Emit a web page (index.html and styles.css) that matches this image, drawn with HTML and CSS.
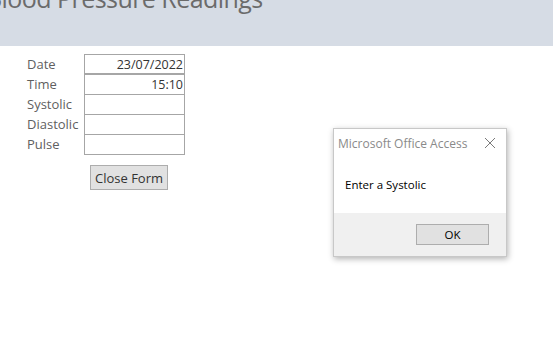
FILE: index.html
```html
<!DOCTYPE html>
<html lang="en">
<head>
    <meta charset="UTF-8">
    <title>Blood Pressure Readings</title>
    <link rel="stylesheet" href="styles.css">
</head>
<body>

    <div class="header">
        <h1>Blood Pressure Readings</h1>
    </div>

    <div class="form">
        <div class="row">
            <label>Date</label>
            <div class="field">23/07/2022</div>
        </div>
        <div class="row">
            <label>Time</label>
            <div class="field">15:10</div>
        </div>
        <div class="row">
            <label>Systolic</label>
            <div class="field"></div>
        </div>
        <div class="row">
            <label>Diastolic</label>
            <div class="field"></div>
        </div>
        <div class="row">
            <label>Pulse</label>
            <div class="field"></div>
        </div>
        <button class="close-btn">Close Form</button>
    </div>

    <div class="msgbox">
        <div class="msg-title">
            <span>Microsoft Office Access</span>
            <svg width="12" height="12" viewBox="0 0 12 12"><path d="M1 1L11 11M11 1L1 11" stroke="#7a7a7a" stroke-width="1" fill="none"/></svg>
        </div>
        <div class="msg-body">Enter a Systolic</div>
        <div class="msg-footer">
            <button class="ok-btn">OK</button>
        </div>
    </div>

</body>
</html>
```

FILE: styles.css
```css
body {
    font-family: 'Open Sans', sans-serif;
    background-color: #ffffff;
    margin: 0;
    padding: 0;
    overflow: hidden;
}
.header {
    background-color: #d6dce5;
    height: 46px;
    overflow: hidden;
}
.header h1 {
    margin: -19px 0 0 -14px;
    font-size: 25px;
    font-weight: normal;
    color: #6b6b6b;
    white-space: nowrap;
    line-height: 34px;
    letter-spacing: -0.55px;
}
.form {
    padding: 8px 0 0 27px;
}
.row {
    display: flex;
    align-items: center;
    height: 20px;
}
.row label {
    width: 57px;
    font-size: 13px;
    color: #5f5f5f;
}
.field {
    box-sizing: border-box;
    width: 101px;
    height: 21px;
    margin-bottom: -1px;
    border: 1px solid #a6a6a6;
    font-size: 12.5px;
    color: #333333;
    text-align: right;
    padding: 1px 1px 0 0;
    line-height: 17px;
}
.row:first-child .field {
    border-bottom-width: 2px;
}
.close-btn {
    margin: 11px 0 0 63px;
    width: 78px;
    height: 25px;
    background-color: #e1e1e1;
    border: 1px solid #adadad;
    font-family: 'Open Sans', sans-serif;
    font-size: 13px;
    color: #333333;
    padding: 0;
}
.msgbox {
    position: absolute;
    left: 333px;
    top: 128px;
    width: 172px;
    background-color: #ffffff;
    border: 1px solid #c8c8c8;
    box-shadow: 1px 2px 6px rgba(0, 0, 0, 0.3);
}
.msg-title {
    display: flex;
    justify-content: space-between;
    align-items: center;
    height: 28px;
    padding: 0 10px 0 4px;
    font-size: 12px;
    color: #8a8a8a;
}
.msg-body {
    height: 56px;
    padding: 20px 0 0 11px;
    box-sizing: border-box;
    font-size: 11.5px;
    color: #000000;
}
.msg-footer {
    background-color: #f0f0f0;
    height: 43px;
    display: flex;
    justify-content: flex-end;
    align-items: flex-start;
    padding: 11px 17px 0 0;
    box-sizing: border-box;
}
.ok-btn {
    width: 73px;
    height: 21px;
    background-color: #e1e1e1;
    border: 1px solid #adadad;
    font-family: 'Open Sans', sans-serif;
    font-size: 11.5px;
    color: #000000;
    padding: 0;
}
```
